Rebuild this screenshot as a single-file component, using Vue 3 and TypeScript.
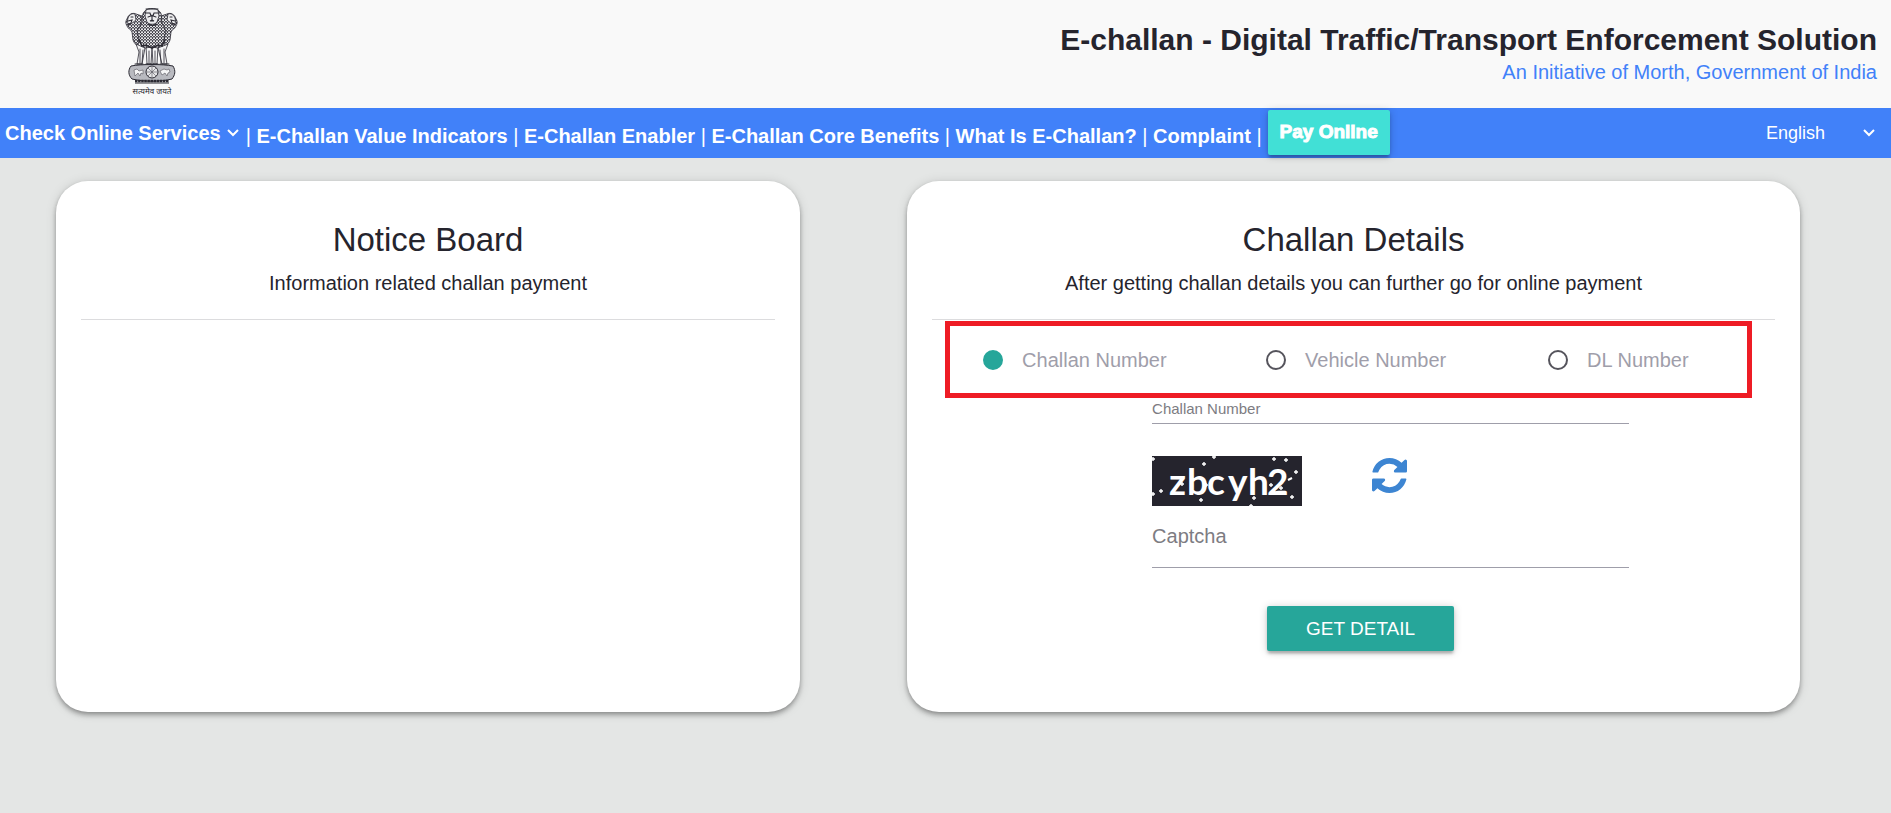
<script setup lang="ts">
import { ref } from 'vue'

interface SearchMode {
  id: string
  label: string
}

const links: string[] = [
  'E-Challan Value Indicators',
  'E-Challan Enabler',
  'E-Challan Core Benefits',
  'What Is E-Challan?',
  'Complaint',
]

const modes: SearchMode[] = [
  { id: 'challan', label: 'Challan Number' },
  { id: 'vehicle', label: 'Vehicle Number' },
  { id: 'dl', label: 'DL Number' },
]

const mode = ref<string>('challan')
const language = ref<string>('English')
const challanNumber = ref<string>('')
const captcha = ref<string>('')

const specks: number[][] = [
  [1, 3], [62, 1], [52, 8], [122, 3], [134, 4], [144, 16], [1, 38], [9, 35],
  [30, 28], [49, 44], [54, 29], [119, 29], [129, 32], [102, 42], [140, 41], [99, 50],
]
</script>

<template>
  <div class="page">
    <header class="masthead">
      <svg class="emblem" viewBox="0 0 110 108" role="img" aria-label="State Emblem of India">
        <defs>
          <pattern id="mane" width="3" height="3" patternUnits="userSpaceOnUse">
            <rect width="3" height="3" fill="#e2e2e5" />
            <path d="M0 0l1.500 2 1.500-2M1.500 2v1" fill="none" stroke="#2b2a33" stroke-width=".9" />
          </pattern>
        </defs>
        <g stroke="#2b2a33" stroke-width=".8" stroke-linejoin="round">
          <path fill="url(#mane)" d="M36 14c-4-2-8 1-9 5-2 3-1 5 0 7 1 3 4 3 5 6l1 8c1 3 3 5 5 6l4-30z" />
          <path fill="url(#mane)" d="M67 14c4-2 8 1 9 5 2 3 1 5 0 7-1 3-4 3-5 6l-1 8c-1 3-3 5-5 6l-4-30z" />
          <path fill="#f4f4f5" d="M36 44l3 8-2 12h5l3-16zM68 44l-3 8 2 12h-5l-4-16zM46 46l1 18h4l1-16 1 16h4l1-18z" />
          <path fill="url(#mane)" d="M45 11c3-3 10-3 14 0 3 2 3 7 2 10l5 10-3 12-5 5-6-1-7 1-5-5-3-12 6-10c-1-3-1-8 2-10z" />
          <path fill="#ececee" d="M46 10c3-2 9-2 12 0l1 6-2 6c-2 3-8 3-10 0l-2-6z" />
          <path fill="#f0f0f1" d="M35 14c-3-1-6 1-7 4l-1 5 4 1 5-4zM68 14c3-1 6 1 7 4l1 5-4 1-5-4z" />
        </g>
        <g fill="none" stroke="#2b2a33" stroke-width="1.100" stroke-linecap="round">
          <path d="M46 13h4l1 3-3 1M58 13h-4l-1 3 3 1M52 15v5l-2 1h4l-2-1M48 24c3 2 6 2 9 0M46 9h12" />
          <path d="M28 21l4-1-1 3-3 2M75 21l-4-1 1 3 3 2M31 17h2M72 17h-2" />
          <path stroke-width=".8" d="M40 49v14M64 49v14M49 51v12M55 51v12M60 50l1 13M43 50l-1 13" />
          <path d="M35 64h8M46 64h6M53 64h5M60 64h9" />
          <path stroke-width="1.600" d="M39 40l3 6 4-1 6 3 6-3 4 1 3-6" />
        </g>
        <path fill="#b9bac0" stroke="#2b2a33" d="M31 66c10-2 32-2 42 0 3 5 2 9-1 13-12 3-28 3-40 0-4-4-4-9-1-13z" />
        <circle cx="52" cy="72" r="6" fill="#e6e6e8" stroke="#2b2a33" />
        <path fill="none" stroke="#55545c" stroke-width=".6" d="M52 67v10M47 72h10M48 68l8 8M56 68l-8 8" />
        <path fill="#f5f5f6" stroke="#55545c" stroke-width=".6" d="M34 70l3-1 2 2 4-1v4l-2-1-1 3-2-3-3 3zM60 71l4-2 3 1 2-1 1 3-2 1-1 3-2-3-3 2z" />
        <path fill="none" stroke="#2b2a33" stroke-width="2.400" stroke-dasharray="2.500 .6" d="M35 81h34" />
        <path stroke="#2b2a33" d="M35 83h34" />
        <text x="52" y="94" text-anchor="middle" class="motto">सत्यमेव जयते</text>
      </svg>
      <div class="titles">
        <h1>E-challan - Digital Traffic/Transport Enforcement Solution</h1>
        <p>An Initiative of Morth, Government of India</p>
      </div>
    </header>

    <nav class="bar" aria-label="Main">
      <button type="button" class="services">
        Check Online Services
        <svg class="chevron" viewBox="0 0 12 8" aria-hidden="true"><path d="M1 1l5 5 5-5" /></svg>
      </button>
      <div class="links">
        <template v-for="link in links" :key="link">| <a href="#">{{ link }}</a>{{ ' ' }}</template>|
      </div>
      <button type="button" class="pay">Pay Online</button>
      <div class="language">
        <select v-model="language" aria-label="Language">
          <option>English</option>
        </select>
        <svg class="chevron" viewBox="0 0 12 8" aria-hidden="true"><path d="M1 1l5 5 5-5" /></svg>
      </div>
    </nav>

    <main class="cards">
      <section class="card">
        <h2>Notice Board</h2>
        <p class="lead">Information related challan payment</p>
        <hr />
      </section>

      <section class="card">
        <h2>Challan Details</h2>
        <p class="lead">After getting challan details you can further go for online payment</p>
        <hr />
        <form @submit.prevent>
          <div class="modes" role="radiogroup" aria-label="Search by">
            <label v-for="m in modes" :key="m.id" class="mode">
              <input v-model="mode" type="radio" name="mode" :value="m.id" />
              {{ m.label }}
            </label>
          </div>
          <div class="fields">
            <input
              v-model="challanNumber"
              class="field number"
              type="text"
              placeholder="Challan Number"
              aria-label="Challan Number"
            />
            <div class="challenge">
              <svg class="code" viewBox="0 0 150 50" role="img" aria-label="Captcha image">
                <rect width="150" height="50" fill="#25242d" />
                <text x="17 35 55 76 96 115" y="39">zbcyh2</text>
                <g stroke="#fff" stroke-width="1.400">
                  <path
                    v-for="(s, i) in specks"
                    :key="i"
                    :d="`M${s[0] - 2} ${s[1]}h4M${s[0]} ${s[1] - 2}v4`"
                  />
                  <path stroke-width="2" d="M136 24l4-2" />
                </g>
              </svg>
              <button type="button" class="refresh" aria-label="Refresh captcha">
                <svg viewBox="0 128 1536 1536" aria-hidden="true">
                  <path
                    d="M1511 1056q0 5-1 7-64 268-268 434.500t-478 166.500q-146 0-282.500-55t-243.500-157l-129 129q-19 19-45 19t-45-19-19-45v-448q0-26 19-45t45-19h448q26 0 45 19t19 45-19 45l-137 137q71 66 161 102t187 36q134 0 250-65t186-179q11-17 53-117 8-23 30-23h192q13 0 22.500 9.500t9.500 22.500zM1536 256v448q0 26-19 45t-45 19h-448q-26 0-45-19t-19-45 19-45l138-138q-148-137-349-137-134 0-250 65t-186 179q-11 17-53 117-8 23-30 23h-199q-13 0-22.500-9.500t-9.500-22.500v-7q65-268 270-434.500t480-166.500q146 0 284 55.500t245 156.500l130-129q19-19 45-19t45 19 19 45z"
                  />
                </svg>
              </button>
            </div>
            <input
              v-model="captcha"
              class="field"
              type="text"
              placeholder="Captcha"
              aria-label="Captcha"
            />
            <button type="submit" class="submit">GET DETAIL</button>
          </div>
        </form>
      </section>
    </main>
  </div>
</template>

<style>
body {
  margin: 0;
  background: #e4e6e5;
}
</style>

<style scoped>
.page {
  min-height: 100vh;
  font-family: "Liberation Sans", Arial, sans-serif;
  font-size: 20px;
  line-height: 24px;
  color: #25242d;
}

h1,
h2,
p {
  margin: 0;
}

button,
input,
select {
  font-family: inherit;
}

.masthead {
  display: flex;
  justify-content: space-between;
  padding: 0 14px 0 100px;
  background: #f9f9f9;
}

.emblem {
  display: block;
  width: 110px;
  height: 108px;
}

.motto {
  font-family: "Noto Sans Devanagari", "Noto Sans", sans-serif;
  font-size: 8px;
  fill: #2b2a33;
}

.titles {
  padding-top: 22px;
  text-align: right;
}

h1 {
  font-size: 30px;
  line-height: 36px;
}

.titles p {
  padding-top: 2px;
  color: #4181f9;
}

.bar {
  display: flex;
  align-items: center;
  height: 50px;
  padding: 0 16px 0 5px;
  background: #4181f9;
  color: #fff;
}

.services {
  display: flex;
  align-items: center;
  gap: 6px;
  padding: 0;
  border: 0;
  background: none;
  color: inherit;
  font-size: 20px;
  font-weight: 700;
  cursor: pointer;
}

.chevron {
  width: 12px;
  height: 8px;
  fill: none;
  stroke: currentColor;
  stroke-width: 2;
}

.links {
  padding: 5px 0 0 7px;
  white-space: nowrap;
}

.links a {
  color: inherit;
  font-weight: 700;
  text-decoration: none;
}

.pay,
.submit {
  height: 45px;
  border: 0;
  border-radius: 2px;
  color: #fff;
  font-size: 19px;
  cursor: pointer;
  box-shadow:
    0 3px 3px rgba(0, 0, 0, 0.14),
    0 4px 2px -2px rgba(0, 0, 0, 0.12),
    0 1px 8px rgba(0, 0, 0, 0.2);
}

.pay {
  margin: 0 0 2px 6px;
  padding: 0 12px;
  background: #41e0d6;
  font-weight: 700;
  -webkit-text-stroke: 1px #fff;
}

.language {
  display: flex;
  align-items: center;
  margin-left: auto;
}

.language select {
  width: 97px;
  padding: 0;
  border: 0;
  background: none;
  color: inherit;
  font-size: 18px;
  appearance: none;
}

.language option {
  color: #25242d;
}

.cards {
  display: grid;
  grid-template-columns: 5fr 6fr;
  gap: 107px;
  padding: 23px 91px 40px 56px;
}

.card {
  box-sizing: border-box;
  min-height: 531px;
  padding: 39px 25px 60px;
  border-radius: 32px;
  background: #fff;
  box-shadow:
    0 4px 5px rgba(0, 0, 0, 0.14),
    0 1px 12px rgba(0, 0, 0, 0.12),
    0 2px 5px -1px rgba(0, 0, 0, 0.3);
}

h2 {
  font-size: 33px;
  font-weight: 400;
  line-height: 40px;
  text-align: center;
}

.lead {
  padding-top: 11px;
  text-align: center;
}

hr {
  height: 1px;
  margin: 24px 0 0;
  border: 0;
  background: #dcdcde;
}

.modes {
  display: grid;
  grid-template-columns: 283px 282px 1fr;
  align-items: center;
  box-sizing: border-box;
  height: 77px;
  margin: 1px 23px 0 13px;
  padding-left: 33px;
  border: 5px solid #ee1c25;
}

.mode {
  display: flex;
  align-items: center;
  gap: 19px;
  color: #9f9eaa;
}

.mode input {
  width: 20px;
  height: 20px;
  margin: 0;
  border: 2px solid #55545c;
  border-radius: 50%;
  appearance: none;
}

.mode input:checked {
  border-color: #26a69a;
  background: #26a69a;
}

.fields {
  display: flex;
  flex-direction: column;
  width: 477px;
  max-width: 100%;
  margin-left: 220px;
}

.field {
  height: 60px;
  box-sizing: border-box;
  padding: 0 0 2px;
  border: 0;
  border-bottom: 1px solid #9f9eaa;
  background: none;
  color: inherit;
  font-size: 20px;
  outline: none;
}

.field::placeholder {
  color: #7d7c82;
  opacity: 1;
}

.number {
  height: 26px;
  padding: 0 0 4px;
  font-size: 15px;
}

.challenge {
  display: flex;
  gap: 70px;
  padding: 32px 0 2px;
}

.code {
  width: 150px;
  height: 50px;
}

.code text {
  fill: #fff;
  font-family: Lato, sans-serif;
  font-size: 37px;
  font-weight: 700;
}

.refresh {
  height: 35px;
  margin-top: 2px;
  padding: 0;
  border: 0;
  background: none;
  cursor: pointer;
}

.refresh svg {
  display: block;
  width: 35px;
  height: 35px;
  fill: #3d85d2;
}

.submit {
  width: 187px;
  margin: 38px 0 0 115px;
  background: #26a69a;
}
</style>
